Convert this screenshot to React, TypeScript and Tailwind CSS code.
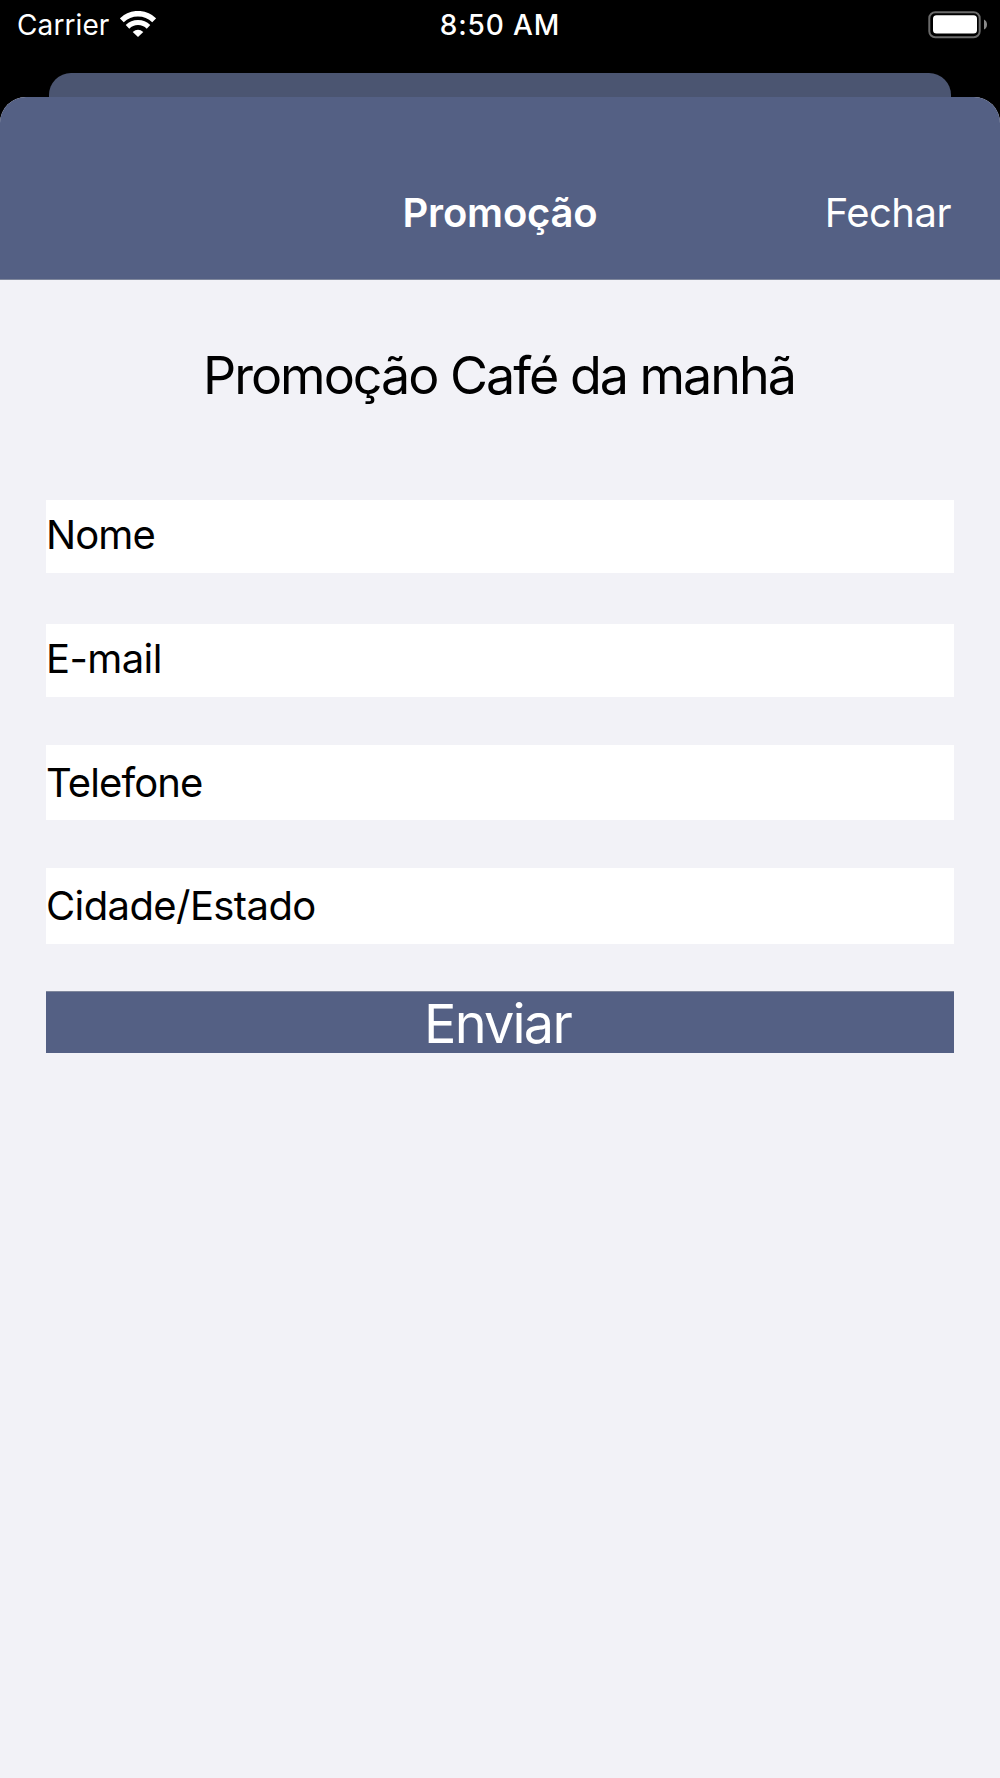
import clsx from 'clsx';

const fields = [
  { id: 'nome', label: 'Nome', box: 'h-[73px] pb-[3px]', text: 'tracking-[-0.9px]' },
  { id: 'email', label: 'E-mail', box: 'mt-[51px] h-[73px] pb-[3px]', text: 'tracking-[-0.6px]' },
  { id: 'telefone', label: 'Telefone', box: 'mt-12 h-[75px]', text: 'tracking-[-0.9px]' },
  { id: 'cidade', label: 'Cidade/Estado', box: 'mt-12 h-[76px] pb-[1px]', text: 'tracking-[-0.6px]' },
];

function WifiIcon() {
  return (
    <svg className="w-9 h-[27px]" viewBox="0 0 36 27" fill="none" stroke="white">
      <path d="M1.8 9.3 A23.2 23.2 0 0 1 34.2 9.3" strokeWidth="5.6" />
      <path d="M7.5 15.9 A15 15 0 0 1 28.5 15.9" strokeWidth="5" />
      <path d="M12.7 21 Q18 16.5 23.3 21 L18 26 Z" fill="white" stroke="none" />
    </svg>
  );
}

function BatteryIcon() {
  return (
    <svg className="w-[60px] h-7" viewBox="0 0 60 28">
      <rect x="1.3" y="1.2" width="50.4" height="25" rx="6" fill="none" stroke="#6b6b6b" strokeWidth="2" />
      <rect x="5" y="4.2" width="44" height="18.4" rx="3.5" fill="white" />
      <path d="M56 8.5 Q59 10 59 13.5 Q59 17 56 18.5 Z" fill="#8a8a8a" />
    </svg>
  );
}

function StatusBar() {
  return (
    <div className="grid grid-cols-3 h-[73px] pt-[11px] items-start text-[28px] leading-[29px] text-white">
      <div className="flex pl-4">
        <span className="w-[104px] pl-px tracking-[0.1px]">Carrier</span>
        <WifiIcon />
      </div>
      <span className="text-center font-medium tracking-[0.9px]">8:50 AM</span>
      <div className="flex justify-end pr-3">
        <BatteryIcon />
      </div>
    </div>
  );
}

export default function App() {
  return (
    <div
      lang="pt-BR"
      className="flex flex-col h-[1778px] w-[1000px] overflow-hidden bg-black font-['Inter','Liberation_Sans',sans-serif] text-[40px] text-black"
    >
      <StatusBar />

      {/* tela anterior, atrás do modal */}
      <div className="mx-[49px] h-6 shrink-0 rounded-t-[22px] bg-[#4b5571]" />

      <main className="flex flex-1 flex-col overflow-hidden rounded-t-[26px] bg-[#f2f2f7]">
        <header className="grid grid-cols-3 h-[183px] shrink-0 items-center border-b border-[#7f879c] bg-[#546084] pt-[49px] text-white">
          <span />
          <h1 className="text-center font-semibold leading-[48px] tracking-[-0.2px]">Promoção</h1>
          <button className="justify-self-end pr-[49px] leading-[48px] tracking-[-0.5px]">Fechar</button>
        </header>

        <form className="flex flex-col px-[46px]" onSubmit={e => e.preventDefault()}>
          <h2 className="mt-[65px] h-[155px] pr-[2px] text-center text-[52px] leading-[62px] tracking-[-2px]">
            Promoção Café da manhã
          </h2>

          {fields.map(field => (
            <label key={field.id} className={clsx('flex items-center bg-white', field.box)}>
              <span className={clsx('leading-[48px]', field.text)}>{field.label}</span>
            </label>
          ))}

          <button className="mt-[47px] h-[62px] border-t border-[#7f879c] bg-[#546084] pt-[2px] pr-[5px] text-[54px] leading-[60px] tracking-[-1.8px] text-white">
            Enviar
          </button>
        </form>
      </main>
    </div>
  );
}
